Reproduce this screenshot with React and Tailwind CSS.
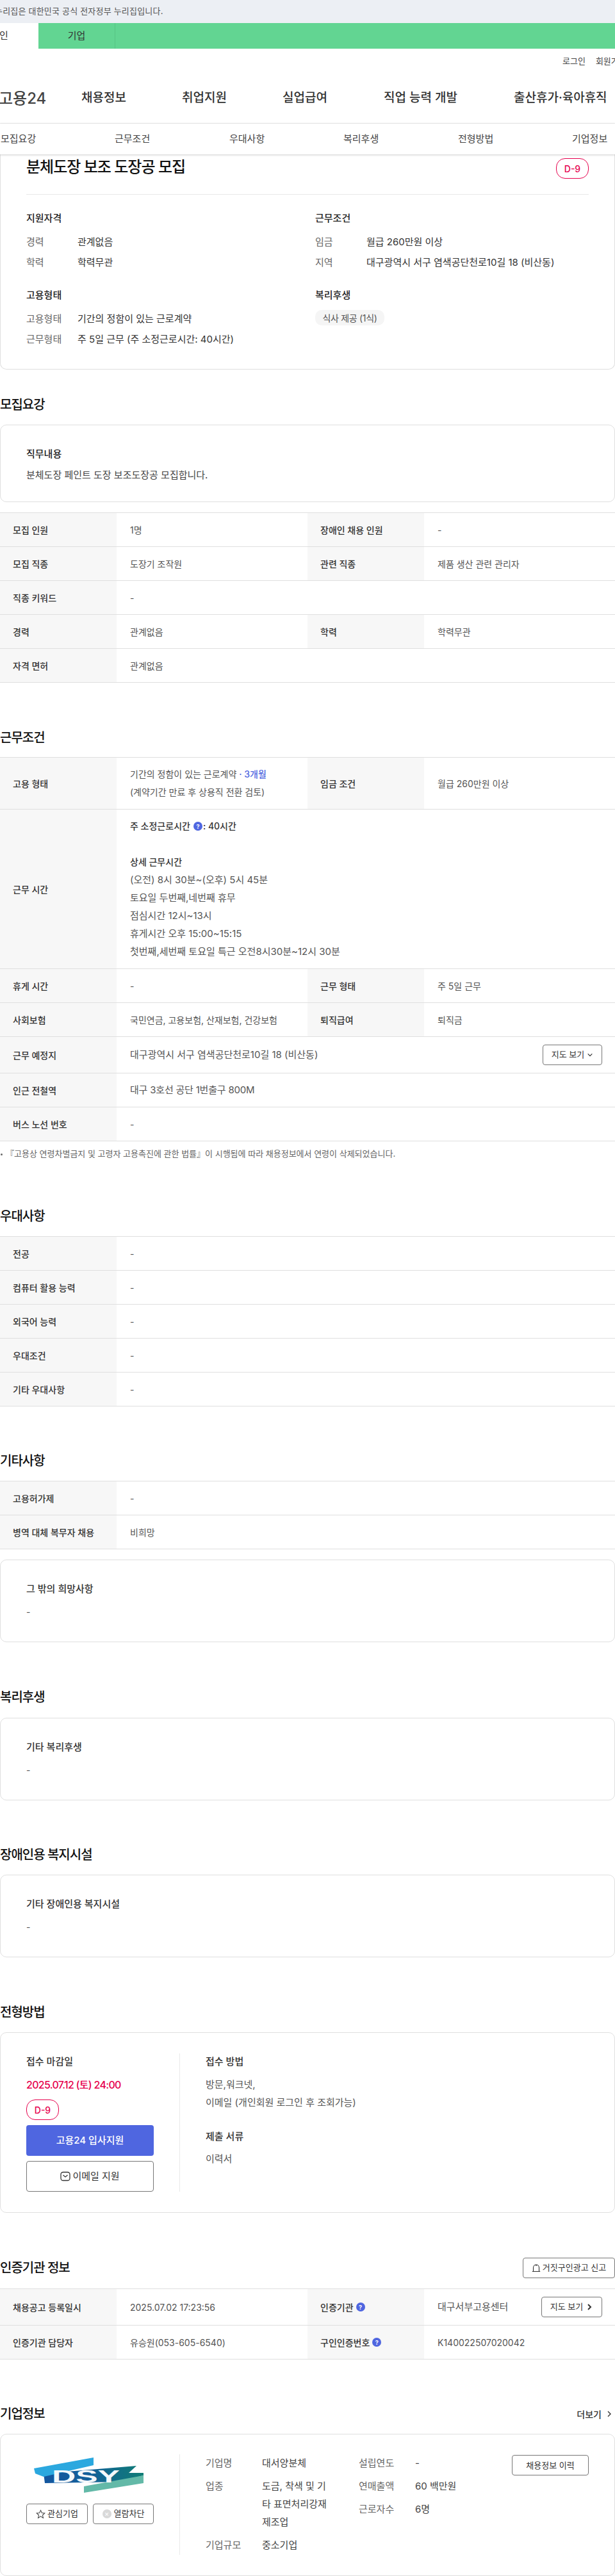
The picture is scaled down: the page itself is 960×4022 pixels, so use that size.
import React from "react";

const FF = `Inter, "Noto Sans CJK KR", "Noto Sans", sans-serif`;

function Help({ className = "" }) {
  return (
    <span className={"inline-flex h-[14px] w-[14px] items-center justify-center rounded-full bg-[#4f66e0] text-[9px] font-bold leading-none text-white " + className}>?</span>
  );
}

function Chevron({ dir = "right", className = "", sw = "1.4" }) {
  const d = dir === "down" ? "M2 4l4 4 4-4" : "M4 2l4 4-4 4";
  return (
    <svg viewBox="0 0 12 12" className={"h-3 w-3 " + className} fill="none" stroke="currentColor" strokeWidth={sw}>
      <path d={d} />
    </svg>
  );
}

function Heading({ children, right, className = "" }) {
  return (
    <div className={"flex h-[32px] items-center justify-between " + className}>
      <h3 className="text-[20px] font-medium leading-[32px] text-[#111] tracking-[-1px]">{children}</h3>
      {right}
    </div>
  );
}

function Box({ className = "", children }) {
  return <div className={"rounded-[10px] border border-[#dfdfdf] bg-white " + className}>{children}</div>;
}

function Label({ children }) {
  return (
    <div className="flex w-[182px] shrink-0 items-center bg-[#f7f7f7] pl-[20px] text-[14px] font-medium text-[#333]">
      {children}
    </div>
  );
}

function Row({ h = "h-[53px]", children }) {
  return <div className={"flex border-b border-[#dfdfdf] " + h}>{children}</div>;
}

function Cell({ children, grow, className = "" }) {
  return (
    <div className={"flex items-center pl-[21px] text-[14px] text-[#555] " + (grow ? "flex-1 " : "w-[298px] shrink-0 ") + className}>
      {children}
    </div>
  );
}

function Two({ a, b, c, d, h }) {
  return (
    <Row h={h}>
      <Label>{a}</Label>
      <Cell>{b}</Cell>
      <Label>{c}</Label>
      <Cell grow>{d}</Cell>
    </Row>
  );
}

function One({ a, b, h, right, className = "" }) {
  return (
    <Row h={h}>
      <Label>{a}</Label>
      <Cell grow className={className}>{b}</Cell>
      {right}
    </Row>
  );
}

function Table({ children, className = "" }) {
  return <div className={"border-t border-[#dfdfdf] " + className}>{children}</div>;
}

function Badge() {
  return (
    <span className="flex h-[32px] w-[51px] items-center justify-center rounded-[14px] border border-[#e6004d] text-[14px] font-medium text-[#e6004d]">
      D-9
    </span>
  );
}

function KV({ k, v }) {
  return (
    <div className="flex h-[32px] items-center text-[15px]">
      <span className="w-[80px] text-[#666]">{k}</span>
      <span className="text-[#333]">{v}</span>
    </div>
  );
}

function Sub({ children, className = "" }) {
  return <div className={"text-[15px] font-medium leading-[28px] text-[#222] " + className}>{children}</div>;
}

function SimpleBox({ title, className = "" }) {
  return (
    <Box className={"h-[129px] px-[40px] pt-[31px] " + className}>
      <div className="text-[15px] font-medium leading-[28px] text-[#333]">{title}</div>
      <div className="mt-[8px] text-[14px] leading-[28px] text-[#555]">-</div>
    </Box>
  );
}

function Btn({ children, className = "" }) {
  return (
    <button className={"flex items-center justify-center rounded-[4px] border border-[#777] bg-white text-[#333] " + className}>
      {children}
    </button>
  );
}

function Logo() {
  return (
    <svg viewBox="0 0 172 55" className="h-[55px] w-[172px]">
      <defs>
        <linearGradient id="dsyg" x1="0" y1="0" x2="1" y2="0">
          <stop offset="0" stopColor="#14569f" />
          <stop offset="0.45" stopColor="#14609a" />
          <stop offset="1" stopColor="#0f7d75" />
        </linearGradient>
      </defs>
      <polygon points="15,25 160,13 148,24 171,24 171,28 133,38 17,40" fill="url(#dsyg)" />
      <polygon points="0,17 93,0 93,12 15,30 2,25" fill="#2ba8df" />
      <polygon points="78,45 171,28 171,40 78,55" fill="#63b9a8" />
      <text x="28" y="39" fontFamily={`"Liberation Sans", sans-serif`} fontWeight="700" fontSize="27" fill="#f4f8fb" textLength="106" lengthAdjust="spacingAndGlyphs">DSY</text>
    </svg>
  );
}

export default function App() {
  return (
    <div className="w-[960px] overflow-hidden bg-white" style={{ fontFamily: FF }}>
      {/* gov banner */}
      <div className="flex h-[36px] items-center overflow-hidden bg-[#eceff4] text-[13px] text-[#555] tracking-[0.2px]">
        <span className="-ml-[8px] whitespace-nowrap">누리집은 대한민국 공식 전자정부 누리집입니다.</span>
      </div>
      {/* audience tabs */}
      <div className="flex h-[40px] bg-[#62d592] text-[15px] text-[#333]">
        <div className="flex w-[60px] items-center overflow-hidden bg-white">
          <span className="-ml-[1px]">인</span>
        </div>
        <div className="flex w-[120px] items-center justify-center border-r border-[#57c585]">기업</div>
      </div>
      {/* util */}
      <div className="flex h-[40px] items-center gap-[16px] overflow-hidden whitespace-nowrap pl-[878px] text-[13px] text-[#444]">
        <span>로그인</span>
        <span>회원가입</span>
      </div>
      {/* main nav */}
      <div className="relative flex h-[77px] items-center overflow-hidden border-b border-[#e9e9e9] pb-[1px] text-[19px] font-medium text-[#333]">
        <span className="absolute -left-[2px] text-[24px] font-medium text-[#444]">고용24</span>
        <span className="ml-[127px] w-[157px] shrink-0">채용정보</span>
        <span className="w-[157px] shrink-0">취업지원</span>
        <span className="w-[158px] shrink-0">실업급여</span>
        <span className="w-[203px] shrink-0">직업 능력 개발</span>
        <span className="shrink-0 whitespace-nowrap">출산휴가·육아휴직</span>
      </div>
      {/* anchors */}
      <div className="relative z-10 flex h-[48px] items-center bg-white pl-[1px] text-[15px] text-[#444] shadow-[0_1px_3px_rgba(0,0,0,0.2)]">
        <span className="w-[178px]">모집요강</span>
        <span className="w-[179px]">근무조건</span>
        <span className="w-[178px]">우대사항</span>
        <span className="w-[179px]">복리후생</span>
        <span className="w-[178px]">전형방법</span>
        <span>기업정보</span>
      </div>

      {/* Summary card */}
      <div className="rounded-b-[10px] border border-t-0 border-[#dfdfdf] px-[40px] pb-[30px]">
        <div className="flex h-[63px] items-start justify-between border-b border-[#e9e9e9] pt-[5px]">
          <h2 className="text-[24px] font-medium leading-[30px] text-[#111] tracking-[-1px]">분체도장 보조 도장공 모집</h2>
          <div className="mt-[1px]"><Badge /></div>
        </div>
        <div className="mt-[23px] grid grid-cols-2">
          <div>
            <Sub>지원자격</Sub>
            <div className="mt-[7px]">
              <KV k="경력" v="관계없음" />
              <KV k="학력" v="학력무관" />
            </div>
            <Sub className="mt-[21px]">고용형태</Sub>
            <div className="mt-[7px]">
              <KV k="고용형태" v="기간의 정함이 있는 근로계약" />
              <KV k="근무형태" v="주 5일 근무 (주 소정근로시간: 40시간)" />
            </div>
          </div>
          <div className="pl-[12px]">
            <Sub>근무조건</Sub>
            <div className="mt-[7px]">
              <KV k="임금" v="월급 260만원 이상" />
              <KV k="지역" v="대구광역시 서구 염색공단천로10길 18 (비산동)" />
            </div>
            <Sub className="mt-[21px]">복리후생</Sub>
            <div className="mt-[9px] flex h-[24px] w-[108px] items-center justify-center rounded-[10px] bg-[#f5f5f5] text-[14px] text-[#555] tracking-[-0.3px]">
              식사 제공 (1식)
            </div>
          </div>
        </div>
      </div>

      {/* 모집요강 */}
      <Heading className="mt-[39px]">모집요강</Heading>
      <Box className="mt-[15px] h-[121px] px-[40px] pt-[31px]">
        <Sub>직무내용</Sub>
        <div className="mt-[5px] text-[15px] leading-[28px] text-[#444]">분체도장 페인트 도장 보조도장공 모집합니다.</div>
      </Box>
      <Table className="mt-[16px]">
        <Two a="모집 인원" b="1명" c="장애인 채용 인원" d="-" />
        <Two a="모집 직종" b="도장기 조작원" c="관련 직종" d="제품 생산 관련 관리자" />
        <One a="직종 키워드" b="-" />
        <Two a="경력" b="관계없음" c="학력" d="학력무관" />
        <One a="자격 면허" b="관계없음" />
      </Table>

      {/* 근무조건 */}
      <Heading className="mt-[70px]">근무조건</Heading>
      <Table className="mt-[14px]">
        <Row h="h-[81px]">
          <Label>고용 형태</Label>
          <div className="flex w-[298px] shrink-0 flex-col justify-center pl-[21px] text-[14px] leading-[28px] text-[#555]">
            <span>
              기간의 정함이 있는 근로계약 <span className="font-medium text-[#4f66e0]">· 3개월</span>
            </span>
            <span>(계약기간 만료 후 상용직 전환 검토)</span>
          </div>
          <Label>임금 조건</Label>
          <Cell grow>월급 260만원 이상</Cell>
        </Row>
        <Row h="h-[249px]">
          <Label>근무 시간</Label>
          <div className="flex flex-1 flex-col justify-center pl-[21px] text-[15px] leading-[28px] text-[#555]">
            <span className="flex items-center text-[14px] font-medium text-[#333]">
              주 소정근로시간 <Help className="mx-[1px] ml-[5px]" />
              <span>: 40시간</span>
            </span>
            <span className="h-[28px]" />
            <span className="text-[14px] font-medium text-[#333]">상세 근무시간</span>
            <span>(오전) 8시 30분~(오후) 5시 45분</span>
            <span>토요일 두번째,네번째 휴무</span>
            <span>점심시간 12시~13시</span>
            <span>휴게시간 오후 15:00~15:15</span>
            <span>첫번째,세번째 토요일 특근 오전8시30분~12시 30분</span>
          </div>
        </Row>
        <Two a="휴게 시간" b="-" c="근무 형태" d="주 5일 근무" />
        <Two a="사회보험" b="국민연금, 고용보험, 산재보험, 건강보험" c="퇴직급여" d="퇴직금" />
        <One
          h="h-[57px]"
          a="근무 예정지"
          b="대구광역시 서구 염색공단천로10길 18 (비산동)"
          className="text-[15px]"
          right={
            <div className="flex items-center pr-[20px]">
              <Btn className="h-[32px] w-[93px] gap-[4px] text-[13px]">
                지도 보기 <Chevron dir="down" className="h-[10px] w-[10px]" />
              </Btn>
            </div>
          }
        />
        <One a="인근 전철역" b="대구 3호선 공단 1번출구 800M" className="text-[15px] tracking-[-0.2px]" />
        <One a="버스 노선 번호" b="-" />
      </Table>
      <div className="mt-[10px] flex h-[20px] items-center text-[13px] text-[#666]">
        <span className="ml-[1px] mr-[5px] h-[3px] w-[3px] rounded-full bg-[#666]" />
        <span>『고용상 연령차별금지 및 고령자 고용촉진에 관한 법률』이 시행됨에 따라 채용정보에서 연령이 삭제되었습니다.</span>
      </div>

      {/* 우대사항 */}
      <Heading className="mt-[71px]">우대사항</Heading>
      <Table className="mt-[15px]">
        <One a="전공" b="-" />
        <One a="컴퓨터 활용 능력" b="-" />
        <One a="외국어 능력" b="-" />
        <One a="우대조건" b="-" />
        <One a="기타 우대사항" b="-" />
      </Table>

      {/* 기타사항 */}
      <Heading className="mt-[69px]">기타사항</Heading>
      <Table className="mt-[15px]">
        <One a="고용허가제" b="-" />
        <One a="병역 대체 복무자 채용" b="비희망" />
      </Table>
      <SimpleBox title="그 밖의 희망사항" className="mt-[16px]" />

      <Heading className="mt-[70px]">복리후생</Heading>
      <SimpleBox title="기타 복리후생" className="mt-[16px]" />

      <Heading className="mt-[69px]">장애인용 복지시설</Heading>
      <SimpleBox title="기타 장애인용 복지시설" className="mt-[15px]" />

      {/* 전형방법 */}
      <Heading className="mt-[70px]">전형방법</Heading>
      <Box className="mt-[15px] flex h-[282px] px-[40px] py-[32px]">
        <div className="w-[240px] shrink-0 border-r border-[#e9e9e9] pr-[40px]">
          <div className="text-[15px] font-medium leading-[26px] text-[#333]">접수 마감일</div>
          <div className="mt-[9px] text-[16px] font-medium leading-[28px] text-[#e6004d] tracking-[-0.7px]">2025.07.12 (토) 24:00</div>
          <div className="mt-[9px]"><Badge /></div>
          <button className="mt-[8px] h-[48px] w-full rounded-[4px] bg-[#4f66e0] text-[15px] font-medium text-white">고용24 입사지원</button>
          <Btn className="mt-[8px] h-[48px] w-full gap-[3px] text-[15px]">
            <svg viewBox="0 0 16 16" className="h-[16px] w-[16px]" fill="none" stroke="#333" strokeWidth="1.3">
              <rect x="1" y="1.5" width="14" height="13" rx="3.5" />
              <path d="M4.5 6l3.5 3 3.5-3" />
            </svg>
            이메일 지원
          </Btn>
        </div>
        <div className="pl-[40px]">
          <div className="text-[15px] font-medium leading-[26px] text-[#333]">접수 방법</div>
          <div className="mt-[9px] text-[15px] leading-[28px] text-[#555]">
            방문,워크넷,
            <br />
            이메일 (개인회원 로그인 후 조회가능)
          </div>
          <div className="mt-[26px] text-[15px] font-medium leading-[26px] text-[#333]">제출 서류</div>
          <div className="mt-[8px] text-[15px] leading-[28px] text-[#555]">이력서</div>
        </div>
      </Box>

      {/* 인증기관 정보 */}
      <Heading
        className="mt-[70px]"
        right={
          <Btn className="h-[32px] w-[144px] gap-[3px] text-[13px]">
            <svg viewBox="0 0 14 14" className="h-[14px] w-[14px]" fill="none" stroke="#333" strokeWidth="1.1">
              <path d="M2.5 12.5V6.5a4.5 4.5 0 019 0v6M0.8 12.5h12.4M7 2v2" />
            </svg>
            거짓구인광고 신고
          </Btn>
        }
      >
        인증기관 정보
      </Heading>
      <Table className="mt-[16px]">
        <Row h="h-[57px]">
          <Label>채용공고 등록일시</Label>
          <Cell>2025.07.02 17:23:56</Cell>
          <Label>
            인증기관 <Help className="ml-[4px]" />
          </Label>
          <Cell grow className="text-[15px]">대구서부고용센터</Cell>
          <div className="flex items-center pr-[20px]">
            <Btn className="h-[32px] w-[95px] gap-[4px] text-[13px]">
              지도 보기 <Chevron sw="2" className="h-[12px] w-[12px]" />
            </Btn>
          </div>
        </Row>
        <Two
          a="인증기관 담당자"
          b="유승원(053-605-6540)"
          c={
            <>
              구인인증번호 <Help className="ml-[4px]" />
            </>
          }
          d="K140022507020042"
        />
      </Table>

      {/* 기업정보 */}
      <Heading
        className="mt-[69px]"
        right={
          <span className="flex items-center gap-[6px] pr-[3px] text-[14px] font-medium text-[#333]">
            더보기 <Chevron />
          </span>
        }
      >
        기업정보
      </Heading>
      <Box className="mt-[15px] flex h-[222px] px-[40px] pt-[31px]">
        <div className="h-[157px] w-[240px] shrink-0 border-r border-[#e9e9e9] pr-[40px]">
          <div className="flex h-[77px] items-start pl-[12px] pt-[5px]"><Logo /></div>
          <div className="flex justify-between">
            <Btn className="h-[32px] w-[96px] gap-[3px] text-[13px]">
              <svg viewBox="0 0 16 16" className="h-[15px] w-[15px]" fill="none" stroke="#444" strokeWidth="1.1">
                <path d="M8 1.5l2 4.4 4.7.5-3.5 3.2 1 4.7L8 11.5l-4.2 2.8 1-4.7-3.5-3.2 4.7-.5z" />
              </svg>
              관심기업
            </Btn>
            <Btn className="h-[32px] w-[95px] gap-[4px] text-[13px]">
              <span className="flex h-[14px] w-[14px] items-center justify-center rounded-full bg-[#d9d9d9] text-[11px] leading-none text-white">×</span>
              열람차단
            </Btn>
          </div>
        </div>
        <div className="flex flex-1 pl-[40px] text-[15px] leading-[28px]">
          <div className="grid h-fit w-[239px] shrink-0 grid-cols-[88px_1fr] gap-y-[8px]">
            <span className="text-[#666]">기업명</span>
            <span className="text-[#444]">대서양분체</span>
            <span className="text-[#666]">업종</span>
            <span className="w-[104px] break-all text-[#444]">도금, 착색 및 기타 표면처리강재 제조업</span>
            <span className="text-[#666]">기업규모</span>
            <span className="text-[#444]">중소기업</span>
          </div>
          <div className="grid h-fit w-[239px] shrink-0 grid-cols-[88px_1fr] gap-y-[8px]">
            <span className="text-[#666]">설립연도</span>
            <span className="text-[#444]">-</span>
            <span className="text-[#666]">연매출액</span>
            <span className="text-[#444]">60 백만원</span>
            <span className="text-[#666]">근로자수</span>
            <span className="text-[#444]">6명</span>
          </div>
          <Btn className="mt-[1px] h-[32px] w-[120px] shrink-0 text-[13px]">채용정보 이력</Btn>
        </div>
      </Box>
    </div>
  );
}
